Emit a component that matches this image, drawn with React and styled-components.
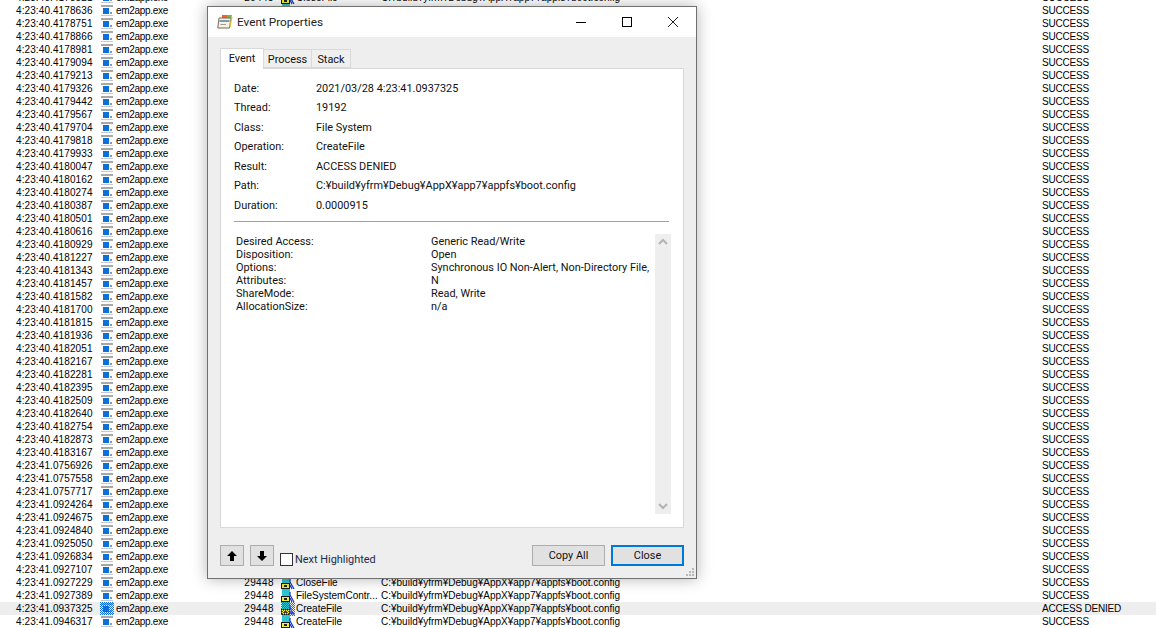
import styled, { createGlobalStyle } from 'styled-components';

const GlobalStyle = createGlobalStyle`
  html, body {
    margin: 0;
    padding: 0;
    background: #fff;
    overflow: hidden;
  }
`;

const PATH = 'C:¥build¥yfrm¥Debug¥AppX¥app7¥appfs¥boot.config';

const times = [
  '4:23:40.4178521',
  '4:23:40.4178636', '4:23:40.4178751', '4:23:40.4178866', '4:23:40.4178981', '4:23:40.4179094', '4:23:40.4179213',
  '4:23:40.4179326', '4:23:40.4179442', '4:23:40.4179567', '4:23:40.4179704', '4:23:40.4179818', '4:23:40.4179933',
  '4:23:40.4180047', '4:23:40.4180162', '4:23:40.4180274', '4:23:40.4180387', '4:23:40.4180501', '4:23:40.4180616',
  '4:23:40.4180929', '4:23:40.4181227', '4:23:40.4181343', '4:23:40.4181457', '4:23:40.4181582', '4:23:40.4181700',
  '4:23:40.4181815', '4:23:40.4181936', '4:23:40.4182051', '4:23:40.4182167', '4:23:40.4182281', '4:23:40.4182395',
  '4:23:40.4182509', '4:23:40.4182640', '4:23:40.4182754', '4:23:40.4182873', '4:23:40.4183167', '4:23:41.0756926',
  '4:23:41.0757558', '4:23:41.0757717', '4:23:41.0924264', '4:23:41.0924675', '4:23:41.0924840', '4:23:41.0925050',
  '4:23:41.0926834', '4:23:41.0927107', '4:23:41.0927229', '4:23:41.0927389', '4:23:41.0937325', '4:23:41.0946317',
];

const fields = [
  ['Date:', '2021/03/28 4:23:41.0937325'],
  ['Thread:', '19192'],
  ['Class:', 'File System'],
  ['Operation:', 'CreateFile'],
  ['Result:', 'ACCESS DENIED'],
  ['Path:', 'C:¥build¥yfrm¥Debug¥AppX¥app7¥appfs¥boot.config'],
  ['Duration:', '0.0000915'],
];

const details = [
  ['Desired Access:', 'Generic Read/Write'],
  ['Disposition:', 'Open'],
  ['Options:', 'Synchronous IO Non-Alert, Non-Directory File,'],
  ['Attributes:', 'N'],
  ['ShareMode:', 'Read, Write'],
  ['AllocationSize:', 'n/a'],
];

function operationFor(index) {
  if (index === 46) return 'FileSystemContr...';
  if (index >= 47) return 'CreateFile';
  return 'CloseFile';
}

function ExeIcon({ selected }) {
  return (
    <svg width="14" height="13" viewBox="0 0 14 13">
      <rect x="1" y="1" width="12" height="11" fill="#fff" />
      <rect x="1" y="1" width="12" height="2" fill="#a8a8a8" />
      <rect x="1" y="11" width="12" height="1" fill="#c8c8c8" />
      <rect x="3" y="4" width="6" height="6" fill="#0f6fd8" />
      <rect x="10" y="8" width="2" height="2" fill="#7a9cc0" />
      {selected && <rect x="0" y="0" width="14" height="13" fill="url(#checkBlue)" />}
    </svg>
  );
}

function FileIcon({ selected }) {
  return (
    <svg width="14" height="14" viewBox="0 0 14 14">
      <rect x="1" y="0" width="8" height="8" fill="#2fc4cf" />
      <rect x="0.5" y="7.5" width="8" height="5" fill="#f5ec3a" stroke="#1a1a1a" />
      <rect x="3" y="9" width="3" height="2" fill="#222" />
      <path d="M9 3 L9 6 M9 6 L13 13 M9 9 L11 13" stroke="#1030c0" strokeWidth="1.2" fill="none" />
      {selected && <rect x="0" y="0" width="14" height="14" fill="url(#checkBlue)" />}
    </svg>
  );
}

function TitleIcon() {
  return (
    <svg width="16" height="16" viewBox="0 0 16 16">
      <path d="M5 1 H10 V4 H5 Z" fill="#e8662a" />
      <path d="M10 1 H15 L14 5 H10 Z" fill="#7fb24a" />
      <path d="M2 4 H14 L12.5 14 H0.8 Z" fill="#f7f2df" stroke="#6f6a5a" />
      <path d="M2.5 7 H12.5" stroke="#4a6fa8" strokeWidth="1.4" />
      <path d="M3.5 10.5 H9" stroke="#9a9a9a" />
      <path d="M14 3 L15.5 3 L13.5 13 L12.5 13 Z" fill="#d8c23a" />
    </svg>
  );
}

function Row({ time, index }) {
  const selected = index === 47;
  return (
    <ProcRow $selected={selected}>
      <TimeCell>{time}</TimeCell>
      <IconCell>
        <ExeIcon selected={selected} />
      </IconCell>
      <NameCell>em2app.exe</NameCell>
      <PidCell>29448</PidCell>
      <OpIconCell>
        <FileIcon selected={selected} />
      </OpIconCell>
      <OpCell>{operationFor(index)}</OpCell>
      <PathCell>{PATH}</PathCell>
      <ResultCell>{selected ? 'ACCESS DENIED' : 'SUCCESS'}</ResultCell>
    </ProcRow>
  );
}

export default function App() {
  return (
    <Page>
      <GlobalStyle />
      <PatternDefs width="0" height="0">
        <defs>
          <pattern id="checkBlue" width="2" height="2" patternUnits="userSpaceOnUse">
            <rect x="0" y="0" width="1" height="1" fill="#0f6fd8" />
            <rect x="1" y="1" width="1" height="1" fill="#0f6fd8" />
          </pattern>
        </defs>
      </PatternDefs>
      <List>
        {times.map((time, index) => (
          <Row key={time} time={time} index={index} />
        ))}
      </List>

      <Dialog>
        <TitleBar>
          <TitleIconBox>
            <TitleIcon />
          </TitleIconBox>
          <TitleText>Event Properties</TitleText>
          <WinButtons>
            <WinButton>
              <svg width="12" height="12" viewBox="0 0 12 12">
                <path d="M1 6.5 H11" stroke="#000" />
              </svg>
            </WinButton>
            <WinButton>
              <svg width="12" height="12" viewBox="0 0 12 12">
                <rect x="1.5" y="1.5" width="9" height="9" fill="none" stroke="#000" />
              </svg>
            </WinButton>
            <WinButton>
              <svg width="12" height="12" viewBox="0 0 12 12">
                <path d="M1 1 L11 11 M11 1 L1 11" stroke="#222" />
              </svg>
            </WinButton>
          </WinButtons>
        </TitleBar>

        <Body>
          <Tabs>
            <Tab $active $width={44}>Event</Tab>
            <Tab $width={48}>Process</Tab>
            <Tab $width={39}>Stack</Tab>
          </Tabs>
          <Panel>
            <FieldList>
              {fields.map(([label, value]) => (
                <FieldRow key={label}>
                  <FieldLabel>{label}</FieldLabel>
                  <span>{value}</span>
                </FieldRow>
              ))}
            </FieldList>
            <Separator />
            <DetailArea>
              <DetailList>
                {details.map(([label, value]) => (
                  <DetailRow key={label}>
                    <DetailLabel>{label}</DetailLabel>
                    <span>{value}</span>
                  </DetailRow>
                ))}
              </DetailList>
              <ScrollBar>
                <svg width="16" height="16" viewBox="0 0 16 16">
                  <path d="M4 10 L8 6 L12 10" fill="none" stroke="#b4b4b4" strokeWidth="2" />
                </svg>
                <svg width="16" height="16" viewBox="0 0 16 16">
                  <path d="M4 6 L8 10 L12 6" fill="none" stroke="#b4b4b4" strokeWidth="2" />
                </svg>
              </ScrollBar>
            </DetailArea>
          </Panel>

          <Footer>
            <ArrowButton>
              <svg width="12" height="12" viewBox="0 0 12 12">
                <path d="M6 1 L11 6 H8 V11 H4 V6 H1 Z" fill="#000" />
              </svg>
            </ArrowButton>
            <ArrowButton>
              <svg width="12" height="12" viewBox="0 0 12 12">
                <path d="M6 11 L11 6 H8 V1 H4 V6 H1 Z" fill="#000" />
              </svg>
            </ArrowButton>
            <HighlightCheck>
              <CheckBox />
              Next Highlighted
            </HighlightCheck>
            <Spacer />
            <ActionButton>Copy All</ActionButton>
            <ActionButton $primary>Close</ActionButton>
          </Footer>
          <Grip>
            <svg width="10" height="10" viewBox="0 0 10 10">
              <path d="M7 1h2v2H7zM4 4h2v2H4zM7 4h2v2H7zM1 7h2v2H1zM4 7h2v2H4zM7 7h2v2H7z" fill="#b8b8b8" />
            </svg>
          </Grip>
        </Body>
      </Dialog>
    </Page>
  );
}

const Page = styled.div`
  position: relative;
  width: 1156px;
  height: 628px;
  overflow: hidden;
  background: #fff;
`;

const PatternDefs = styled.svg`
  position: absolute;
`;

const List = styled.div`
  margin-top: -9px;
  font-family: 'Liberation Sans', Arial, sans-serif;
  font-size: 10px;
  color: #000;
`;

const ProcRow = styled.div`
  display: flex;
  align-items: center;
  height: 13px;
  white-space: nowrap;
  background: ${(p) => (p.$selected ? '#eeeeee' : 'transparent')};
`;

const TimeCell = styled.div`
  width: 84px;
  margin-left: 16px;
  letter-spacing: 0.1px;
`;

const IconCell = styled.div`
  display: flex;
  width: 16px;
`;

const NameCell = styled.div`
  width: 120px;
  letter-spacing: -0.3px;
`;

const PidCell = styled.div`
  width: 38px;
  text-align: right;
  letter-spacing: 0.4px;
`;

const OpIconCell = styled.div`
  display: flex;
  width: 15px;
  margin-left: 7px;
`;

const OpCell = styled.div`
  width: 85px;
`;

const PathCell = styled.div`
  width: 661px;
`;

const ResultCell = styled.div`
  letter-spacing: -0.2px;
`;

const Dialog = styled.div`
  position: absolute;
  left: 207px;
  top: 6px;
  width: 488px;
  height: 571px;
  display: flex;
  flex-direction: column;
  border: 1px solid #707070;
  background: #eeeeee;
  box-shadow: 0 0 14px rgba(0, 0, 0, 0.3);
  font-family: Roboto, 'Noto Sans', sans-serif;
  font-size: 10.9px;
  color: #111;
`;

const TitleBar = styled.div`
  display: flex;
  align-items: center;
  height: 30px;
  flex: none;
  background: #fff;
`;

const TitleIconBox = styled.div`
  display: flex;
  margin-left: 9px;
`;

const TitleText = styled.div`
  margin-left: 4px;
  font-size: 11.8px;
  color: #222;
`;

const WinButtons = styled.div`
  display: flex;
  margin-left: auto;
`;

const WinButton = styled.div`
  display: flex;
  align-items: center;
  justify-content: center;
  width: 46px;
  height: 30px;
`;

const Body = styled.div`
  position: relative;
  flex: 1;
  padding: 11px 12px 0;
`;

const Tabs = styled.div`
  display: flex;
  align-items: flex-end;
  height: 20px;
`;

const Tab = styled.div`
  display: flex;
  align-items: center;
  justify-content: center;
  box-sizing: border-box;
  position: relative;
  height: ${(p) => (p.$active ? '21px' : '19px')};
  width: ${(p) => p.$width}px;
  padding-bottom: ${(p) => (p.$active ? '1px' : '0')};
  padding-top: ${(p) => (p.$active ? '0' : '2px')};
  margin-bottom: ${(p) => (p.$active ? '-1px' : '0')};
  background: ${(p) => (p.$active ? '#fff' : '#efefef')};
  border: 1px solid #d9d9d9;
  border-left-width: ${(p) => (p.$active ? '1px' : '0')};
  border-bottom-width: ${(p) => (p.$active ? '0' : '1px')};
`;

const Panel = styled.div`
  box-sizing: border-box;
  height: 460px;
  background: #fff;
  border: 1px solid #d9d9d9;
  padding: 9px 13px 0;
`;

const FieldList = styled.div`
  display: flex;
  flex-direction: column;
  padding-top: 0.5px;
`;

const FieldRow = styled.div`
  display: flex;
  align-items: center;
  height: 19.5px;
  white-space: nowrap;
`;

const FieldLabel = styled.span`
  width: 82px;
`;

const Separator = styled.div`
  height: 1px;
  margin-top: 6px;
  margin-right: 1px;
  background: #a0a0a0;
`;

const DetailArea = styled.div`
  display: flex;
  margin-top: 12px;
  height: 280px;
  margin-right: -2px;
`;

const DetailList = styled.div`
  width: 416px;
  overflow: hidden;
  padding: 1px 0 0 2px;
`;

const DetailRow = styled.div`
  display: flex;
  align-items: center;
  height: 13px;
  white-space: nowrap;
`;

const DetailLabel = styled.span`
  width: 195px;
  flex: none;
`;

const ScrollBar = styled.div`
  display: flex;
  flex-direction: column;
  justify-content: space-between;
  width: 16px;
  margin-left: 3px;
  background: #eeeeee;
`;

const Footer = styled.div`
  display: flex;
  align-items: flex-start;
  margin-top: 17px;
`;

const ArrowButton = styled.div`
  display: flex;
  align-items: center;
  justify-content: center;
  box-sizing: border-box;
  width: 24px;
  height: 21px;
  margin-right: 6px;
  background: #e1e1e1;
  border: 1px solid #adadad;
`;

const HighlightCheck = styled.label`
  display: flex;
  align-items: center;
  gap: 2px;
  margin-top: 8px;
  white-space: nowrap;
  color: #1a2a4a;
`;

const CheckBox = styled.span`
  display: block;
  box-sizing: border-box;
  width: 13px;
  height: 13px;
  background: #fff;
  border: 1px solid #333;
`;

const Spacer = styled.div`
  flex: 1;
`;

const ActionButton = styled.div`
  display: flex;
  align-items: center;
  justify-content: center;
  box-sizing: border-box;
  width: 73px;
  height: 21px;
  margin-left: ${(p) => (p.$primary ? '6px' : '0')};
  background: #e1e1e1;
  border: ${(p) => (p.$primary ? '2px solid #0078d7' : '1px solid #adadad')};
`;

const Grip = styled.div`
  position: absolute;
  right: 1px;
  bottom: 1px;
  display: flex;
`;
